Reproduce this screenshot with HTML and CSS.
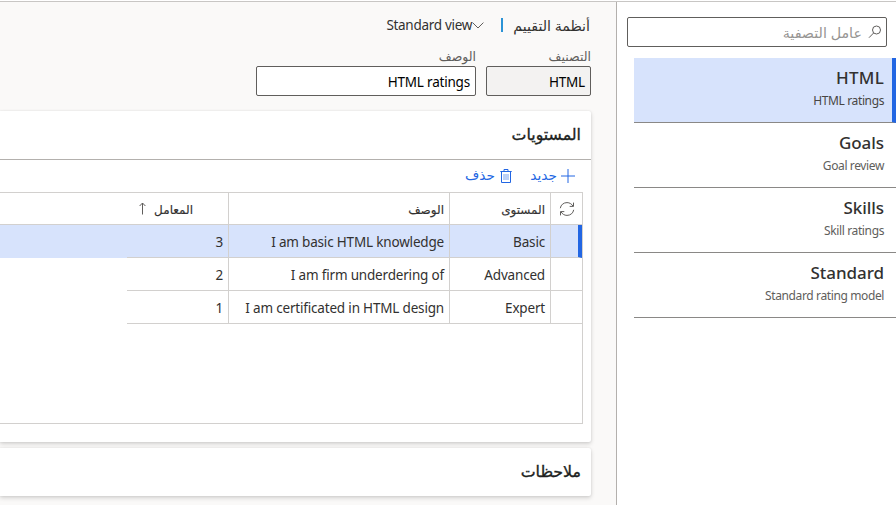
FILE: index.html
```html
<!DOCTYPE html>
<html lang="ar" dir="rtl">
<head>
<meta charset="utf-8">
<title>أنظمة التقييم</title>
<link rel="stylesheet" href="styles.css">
</head>
<body>
<div class="app">
  <aside class="sidebar">
    <div class="filter">
      <svg class="search-icon" width="14" height="14" viewBox="0 0 14 14"><circle cx="8.5" cy="5" r="4"/><path d="M5.6 8 1 12.7"/></svg>
      <span class="filter-hint">عامل التصفية</span>
    </div>
    <ul class="list">
      <li class="item selected"><b class="name html">HTML</b><span class="detail">HTML ratings</span></li>
      <li class="item"><b class="name">Goals</b><span class="detail">Goal review</span></li>
      <li class="item"><b class="name">Skills</b><span class="detail">Skill ratings</span></li>
      <li class="item"><b class="name">Standard</b><span class="detail">Standard rating model</span></li>
    </ul>
  </aside>
  <main class="main">
    <div class="crumbs">
      <span class="title">أنظمة التقييم</span>
      <i class="divider"></i>
      <svg class="chevron" width="12" height="7" viewBox="0 0 12 7"><path d="M.6.6 6 6 11.4.6"/></svg>
      <span class="view">Standard view</span>
    </div>
    <div class="fields">
      <div class="field short"><span class="label">التصنيف</span><div class="input disabled">HTML</div></div>
      <div class="field long"><span class="label">الوصف</span><div class="input">HTML ratings</div></div>
    </div>
    <section class="card levels">
      <h2 class="heading">المستويات</h2>
      <div class="tools">
        <svg class="plus" width="14" height="14" viewBox="0 0 14 14"><path d="M7 0v14M0 7h14"/></svg>
        <span class="action new">جديد</span>
        <svg class="trash" width="12" height="14" viewBox="0 0 12 14"><path d="M.3 2.5h11.4M4 2.5v-2h4v2M1.5 2.5v11h9v-11"/><path class="slats" d="M4 5v6M6 5v6M8 5v6"/></svg>
        <span class="action">حذف</span>
      </div>
      <div class="grid">
        <div class="row head">
          <div class="cell"><svg class="refresh" width="16" height="14" viewBox="0 0 16 14"><path d="M1.3 6.2C1.8 2.8 4.6.6 8 .6c2.6 0 4.8 1.4 6 3.6M14.5.6v3.8h-3.8M14.7 7.8c-.5 3.4-3.3 5.6-6.7 5.6-2.6 0-4.8-1.4-6-3.6M1.5 13.4V9.6h3.8"/></svg></div>
          <div class="cell"><span class="caption">المستوى</span></div>
          <div class="cell"><span class="caption">الوصف</span></div>
          <div class="cell sorted"><span class="caption">المعامل</span><svg class="sort" width="7" height="13" viewBox="0 0 7 13"><path d="M3.5 12.5V1M.6 4 3.5 1l2.9 3"/></svg></div>
          <div class="rest"></div>
        </div>
        <div class="row active"><div class="cell"></div><div class="cell">Basic</div><div class="cell">I am basic HTML knowledge</div><div class="cell">3</div><div class="rest"></div></div>
        <div class="row"><div class="cell"></div><div class="cell">Advanced</div><div class="cell">I am firm underdering of</div><div class="cell">2</div><div class="rest"></div></div>
        <div class="row"><div class="cell"></div><div class="cell">Expert</div><div class="cell">I am certificated in HTML design</div><div class="cell">1</div><div class="rest"></div></div>
      </div>
    </section>
    <section class="card notes"><h2 class="heading">ملاحظات</h2></section>
  </main>
</div>
</body>
</html>
```
FILE: styles.css
```css
* { box-sizing: border-box; }
body { margin: 0; width: 896px; height: 505px; overflow: hidden; background: #fff; color: #323130; font: 13.5px "Noto Sans", "DejaVu Sans", sans-serif; }
svg { display: block; flex: none; fill: none; stroke: #605e5c; stroke-width: 1; }
.app { display: grid; grid-template-columns: 280px 616px; height: 504px; margin-top: 1px; border-top: 1px solid #c8c6c4; }
.sidebar { border-left: 1px solid #b3b0ad; padding-top: 15px; }
.filter { display: flex; align-items: center; width: 260px; height: 30px; margin-right: 9px; padding-right: 4px; border: 1px solid #605e5c; border-radius: 2px; }
.search-icon { stroke: #605e5c; }
.filter-hint { margin-right: 6px; color: #979593; font-size: 14.3px; }
.list { list-style: none; margin: 11px 0 0 17px; padding: 0; }
.item { display: flex; flex-direction: column; align-items: flex-start; height: 65px; padding: 8px 12px 0 0; border-bottom: 1px solid #8a8886; }
.item.selected { padding-right: 8px; border-right: 4px solid #2266e3; background: #d7e3fc; }
.name { font-size: 17px; line-height: 23px; font-weight: 500; letter-spacing: -.05px; }
.name.html { letter-spacing: .25px; }
.detail { font-size: 12px; line-height: 24px; letter-spacing: -.38px; color: #605e5c; }
.selected .detail { color: #484644; }
.main { height: 503px; overflow: hidden; background: #faf9f8; }
.crumbs { display: flex; align-items: center; height: 20px; margin: 13px 26px 0 0; }
.title { font-size: 14.2px; width: 77px; white-space: nowrap; }
.divider { width: 2px; height: 14px; margin: 0 10px 0 17px; background: #2b93d6; }
.view { font-size: 13.5px; letter-spacing: -.3px; }
.fields { display: flex; gap: 10px; margin: 13px 25px 0 0; }
.short { width: 105px; }
.long { width: 220px; }
.label { display: block; height: 18px; line-height: 18px; font-size: 12.5px; color: #605e5c; }
.input { height: 30px; padding: 0 5px; border: 1px solid #605e5c; border-radius: 2px; background: #fff; color: #000; font-size: 13.5px; line-height: 31px; letter-spacing: -.2px; }
.disabled { background: #f3f2f1; }
.card { margin-right: 25px; background: #fff; border-radius: 0 2px 2px 0; box-shadow: 0 2px 4px rgba(0,0,0,.16), 0 0 2px rgba(0,0,0,.1); }
.levels { height: 331px; margin-top: 15px; }
.heading { margin: 0; padding-right: 10px; height: 49px; line-height: 46px; font-size: 15.8px; font-weight: 400; -webkit-text-stroke: .35px #201f1e; color: #201f1e; }
.levels .heading { border-bottom: 1px solid #b3b0ad; }
.tools { display: flex; align-items: center; height: 32px; padding-right: 16px; color: #2266e3; }
.tools svg { stroke: #2266e3; }
.slats { stroke-opacity: .6; }
.plus { margin-left: 4px; }
.new { margin-left: 18px; }
.trash { margin-left: 5px; }
.action { font-size: 13.8px; line-height: 18px; padding-bottom: 2px; }
.grid { height: 232px; margin-right: 8px; border: 1px solid #d2d0ce; border-left: 0; }
.row { display: grid; grid-template-columns: 32px 101px 221px 101px 1fr; height: 33px; }
.head { height: 32px; border-bottom: 1px solid #d2d0ce; font-size: 12px; }
.caption { padding-top: 2px; -webkit-text-stroke: .15px #323130; }
.cell { display: flex; align-items: center; padding: 2px 5px 0 0; letter-spacing: -.18px; border-left: 1px solid #d2d0ce; border-bottom: 1px solid #d2d0ce; white-space: nowrap; }
.cell:nth-child(4) { border-left: 0; padding-right: 5px; }
.head .cell { border-bottom: 0; padding: 0 5px 0 0; letter-spacing: 0; }
.head .cell:first-child { padding-right: 7px; }
.head .cell.sorted { padding-right: 35px; }
.sort { margin-right: 8px; }
.active { background: #d7e3fc; }
.active .cell:first-child { border-right: 4px solid #2266e3; }
.notes { height: 48px; margin-top: 6px; }
```
